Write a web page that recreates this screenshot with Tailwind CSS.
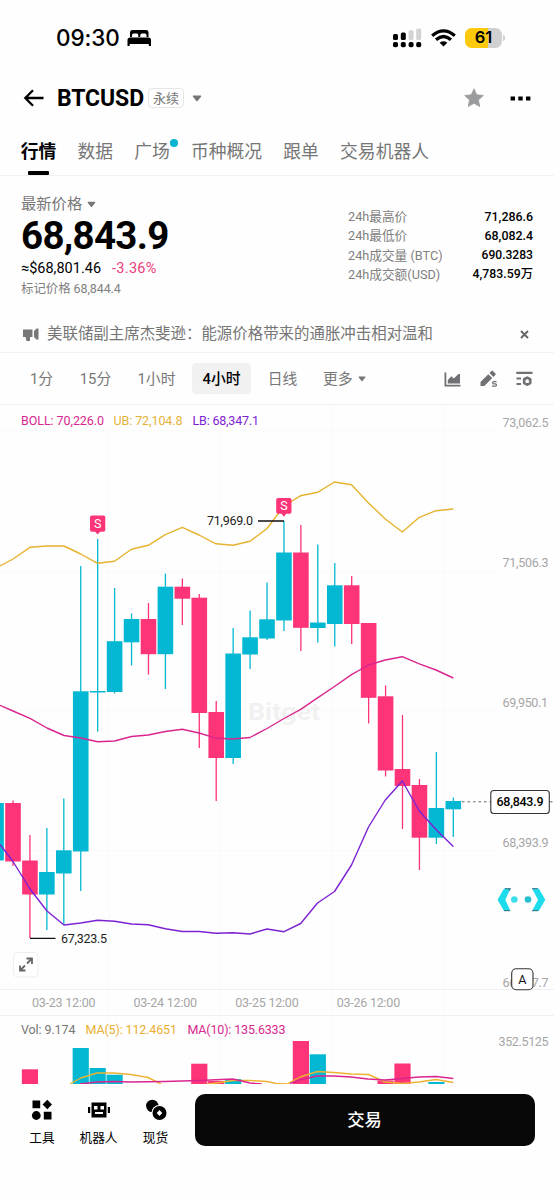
<!DOCTYPE html>
<html lang="zh-CN">

<head>
    <meta charset="UTF-8">
    <meta name="viewport" content="width=device-width, initial-scale=1.0">
    <title>BTCUSD 永续</title>
    <script src="https://cdn.jsdelivr.net/npm/@tailwindcss/browser@4"></script>
</head>

<body class="bg-white">
    <div class="w-[554px] h-[1200px] overflow-hidden flex flex-col bg-[#fefefe] text-black font-['Roboto','Noto_Sans_CJK_SC',sans-serif]">

        <!-- status bar -->
        <div class="h-[75px] shrink-0 flex items-center pl-[56px] pr-[49px]">
            <span class="pt-[2px] font-['Inter',sans-serif] font-medium text-[22.5px] leading-none tracking-[-0.1px]">09:30</span>
            <svg class="ml-[7px] mt-px" width="25" height="18" viewBox="0 0 25 18">
                <path d="M3 8V3.500Q3 1 5.500 1H19Q21.500 1 21.500 3.500V8H19.500V6.200Q19.500 4.500 18 4.500H15Q13.300 4.500 13.300 6.200V8H11.300V6.200Q11.300 4.500 9.800 4.500H6.700Q5 4.500 5 6.200V8Z" />
                <path d="M.5 17V11Q.5 8.500 3 8.500H21.500Q24 8.500 24 11V17H21.800V15H2.700V17Z" />
            </svg>
            <div class="flex items-center ml-auto">
                <svg width="29" height="20" viewBox="0 0 29 20">
                    <rect x="0" y="6" width="5" height="6" rx="1.500" />
                    <rect x="7.800" y="4.500" width="5" height="7.500" rx="1.500" />
                    <rect x="15.600" y="2.300" width="5" height="9.700" rx="1.500" fill="#d3d3d3" />
                    <rect x="23.200" y="0.500" width="5" height="11.500" rx="1.500" fill="#d3d3d3" />
                    <rect x="0" y="14" width="5" height="5.200" rx="1.800" />
                    <rect x="7.800" y="14" width="5" height="5.200" rx="1.800" />
                    <rect x="15.600" y="14" width="5" height="5.200" rx="1.800" />
                    <rect x="23.200" y="14" width="5" height="5.200" rx="1.800" />
                </svg>
                <svg class="ml-[9px]" width="25" height="18" viewBox="0 0 25 18" fill="none" stroke="#000" stroke-width="3.300">
                    <path d="M1.200 6.800Q12.500 -3 23.800 6.800" />
                    <path d="M5 10.800Q12.500 4.300 20 10.800" />
                    <path d="M12.500 17.500L8.700 13.700Q12.500 10.800 16.300 13.700Z" fill="#000" stroke="none" />
                </svg>
                <div class="ml-[9px] w-[37px] h-[20px] rounded-[6.500px] overflow-hidden bg-linear-to-r from-[#fdc90d] from-[62%] to-[#d0d0d0] to-[62%] flex items-center justify-center font-['Inter',sans-serif] font-semibold text-[16.5px] leading-none">61</div>
                <div class="ml-[1px] w-[2px] h-[6px] rounded-r bg-[#cfcfcf]"></div>
            </div>
        </div>

        <!-- title -->
        <div class="h-[46px] shrink-0 flex items-center pl-[23px] pr-[23px]">
            <svg width="22" height="18" viewBox="0 0 22 18" fill="none" stroke="#000" stroke-width="2.300">
                <path d="M20.500 9H2.500M10 1.200L2.300 9L10 16.800" />
            </svg>
            <h1 class="ml-[12px] w-[88px] font-bold text-[23px] leading-none tracking-[-0.1px]">BTCUSD</h1>
            <span class="ml-[3px] w-[36px] h-[20px] rounded-[4px] border border-[#e6e6e6] flex items-center justify-center text-[13px] leading-none text-[#777]">永续</span>
            <svg class="ml-[8px]" width="10" height="7" viewBox="0 0 10 7" fill="#777"><path d="M1.200 .5H8.800Q9.600 .7 9 1.700L5.600 6Q5 6.600 4.400 6L1 1.700Q.4 .7 1.200 .5Z" /></svg>
            <svg class="ml-auto" width="20" height="20" viewBox="0 0 20 20" fill="#9b9c9e"><path d="M10 .8L12.700 6.800L19.300 7.500L14.400 12L15.800 18.600L10 15.300L4.200 18.600L5.600 12L.7 7.500L7.300 6.800Z" stroke="#9b9c9e" stroke-linejoin="round" stroke-width=".8" /></svg>
            <svg class="ml-[26px]" width="21" height="5" viewBox="0 0 21 5"><path d="M.6 .4H5V4.600H.6ZM8.300 .4H12.700V4.600H8.300ZM16 .4H20.400V4.600H16Z" /></svg>
        </div>

        <!-- tabs -->
        <div class="h-[55px] shrink-0 border-b border-[#f1f1f1] flex gap-[21.2px] pl-[20.7px] text-[17.800px] leading-[61px] text-[#767676] whitespace-nowrap">
            <div class="relative font-bold text-black">行情<span class="absolute left-[7px] bottom-0 w-[21px] h-[4px] rounded-[1px] bg-black"></span></div>
            <div>数据</div>
            <div class="relative">广场<span class="absolute left-[35.500px] top-[18px] size-[8px] rounded-full bg-[#06b4d2]"></span></div>
            <div>币种概况</div>
            <div>跟单</div>
            <div>交易机器人</div>
        </div>

        <!-- price -->
        <div class="h-[139px] shrink-0 flex justify-between pl-[21px] pr-[21px]">
            <div class="pt-[18px] whitespace-nowrap">
                <div class="h-[21px] flex items-center text-[15.300px] leading-none text-[#777]">最新价格
                    <svg class="ml-[5px]" width="9" height="7" viewBox="0 0 10 7" fill="#777"><path d="M1.200 .5H8.800Q9.600 .7 9 1.700L5.600 6Q5 6.600 4.400 6L1 1.700Q.4 .7 1.200 .5Z" /></svg>
                </div>
                <div class="h-[42px] flex items-center font-bold text-[38.500px] leading-none tracking-[-0.7px]">68,843.9</div>
                <div class="h-[24px] flex items-center text-[14.5px] leading-none">
                    <span class="w-[91px]">≈$68,801.46</span>
                    <span class="text-[#ee3c7c] tracking-[0.3px]">-3.36%</span>
                </div>
                <div class="h-[17px] flex items-center text-[12.500px] leading-none tracking-[-0.1px] text-[#808080]">标记价格 68,844.4</div>
            </div>
            <div class="pt-[31px] w-[185px] text-[12.700px] leading-[19.3px] text-[#808080]">
                <div class="h-[19.3px] flex justify-between"><span>24h最高价</span><span class="font-medium text-[12.400px] text-black">71,286.6</span></div>
                <div class="h-[19.3px] flex justify-between"><span>24h最低价</span><span class="font-medium text-[12.400px] text-black">68,082.4</span></div>
                <div class="h-[19.3px] flex justify-between"><span>24h成交量 (BTC)</span><span class="font-medium text-[12.100px] text-black">690.3283</span></div>
                <div class="h-[19.3px] flex justify-between"><span>24h成交额(USD)</span><span class="font-medium text-[12.300px] text-black">4,783.59万</span></div>
            </div>
        </div>

        <!-- news -->
        <div class="h-[38px] shrink-0 border-b border-[#f1f1f1] flex items-center pl-[22px] pr-[25px] pt-[2px]">
            <svg width="18" height="15" viewBox="0 0 18 15" fill="#777"><path d="M1 2.500H10.500V10H8V14H4.500L3.500 10H1ZM12 4L14.500 1.500H16.500V12.500H14.500L12 10Z" /></svg>
            <span class="ml-[7px] text-[15.450px] leading-none text-[#767676] whitespace-nowrap">美联储副主席杰斐逊：能源价格带来的通胀冲击相对温和</span>
            <svg class="ml-auto" width="9" height="9" viewBox="0 0 9 9" stroke="#666" stroke-width="1.900"><path d="M1 1L8 8M8 1L1 8" /></svg>
        </div>

        <!-- intervals -->
        <div class="h-[52px] shrink-0 border-b border-[#f1f1f1] flex items-center pl-[16px] pr-[21px] text-[14.800px] leading-none text-[#777] whitespace-nowrap">
            <span class="w-[51px] pt-[2px] text-center">1分</span>
            <span class="w-[57px] pt-[2px] text-center">15分</span>
            <span class="w-[65px] pt-[2px] text-center">1小时</span>
            <span class="ml-[3px] w-[59px] h-[31px] pt-[2px] rounded-[4px] bg-[#f1f1f1] flex items-center justify-center font-medium text-black">4小时</span>
            <span class="w-[63px] pt-[2px] text-center">日线</span>
            <span class="ml-[9px] pt-[2px]">更多</span>
            <svg class="ml-[5px]" width="8" height="6" viewBox="0 0 10 7" fill="#777"><path d="M1.200 .5H8.800Q9.600 .7 9 1.700L5.600 6Q5 6.600 4.400 6L1 1.700Q.4 .7 1.200 .5Z" /></svg>
            <svg class="ml-auto mt-px" width="17" height="15" viewBox="0 0 17 15" fill="#707075"><path d="M.5 .5H2.300V12.700H16.500V14.500H.5ZM3.800 11.500V8L7.300 4.300L9.800 6.500L14.500 2H16V11.500Z" /></svg>
            <svg class="ml-[19px]" width="18" height="18" viewBox="0 0 18 18" fill="#707075">
                <path d="M.5 12L8.300 4.200L12.200 8.100L4.400 15.900H.5ZM9.500 3L11.700 .8Q12.300 .4 12.900 .9L15.500 3.500Q16 4.100 15.500 4.700L13.400 6.900Z" />
                <path d="M16.500 11.600H13.600Q12.600 11.600 12.600 12.700T13.600 13.900H15.500Q16.500 13.900 16.500 15T15.500 16.200H12" fill="none" stroke="#707075" stroke-width="1.200" />
            </svg>
            <svg class="ml-[18px]" width="17" height="16" viewBox="0 0 17 16" fill="#707075">
                <path d="M.3 .8H16.500V2.900H.3ZM.5 6.500H5V8.500H.5ZM.5 12H5V14H.5Z" />
                <path d="M11.200 6.600L14.200 8.200V12L11.200 13.700L8.200 12V8.200Z" fill="none" stroke="#707075" stroke-width="2.700" stroke-linejoin="round" />
            </svg>
        </div>

        <!-- chart -->
        <svg id="chart" class="shrink-0" width="554" height="679" viewBox="0 405 554 679" font-size="12.500">
            <g stroke="#fafafa" stroke-width="1">
                <path d="M0 430.500H500M0 571.500H500M0 710.500H500M0 850.500H500" />
                <path d="M108.500 430V1084M220.500 430V1084M332.500 405V1084M443.500 405V1084" />
            </g>
            <path d="M0 989.500H554M0 1015.500H554" stroke="#f0f0f0" />

            <text x="248" y="719.500" font-size="24.500" font-weight="700" fill="#f1f1f1" textLength="72" lengthAdjust="spacingAndGlyphs">Bitget</text>
            <g id="candles"></g>
            <g id="volumes"></g>

            <g fill="none" stroke-width="1.400" stroke-linejoin="round">
                <polyline stroke="#e6b32e" points="0,566 13,559 30,547.300 47,546 64,546 80.700,554 97.600,563.300 114.500,561.300 131.500,549.300 148.300,545.300 165.300,534.700 182.300,527.300 199,535 216,543.800 233,545.300 250,541.300 267,528.500 284,506 300.700,495.700 317.500,492.300 334.500,482 351.500,484.800 368.500,503 385.300,519 402.300,532 419.300,517.300 436,510.700 453.300,509" />
                <polyline stroke="#d9258f" points="0,705.300 13,711 30,718.300 47,728 64,735.500 80.700,738 97.600,741.700 114.500,741 131.500,736.500 148.300,735 165.300,731.500 182.300,729.300 199,733 216,738.200 233,739 250,737.500 267,728.500 284,718.500 300.700,709.300 317.500,697.800 334.500,686.500 351.500,674.700 368.500,665 385.300,660 402.300,656.700 419.300,663.800 436,670 453.300,678" />
                <polyline stroke="#7d22d3" points="0,844.500 13,861.500 30,889 47,911 64,925 80.700,923 97.600,920.300 114.500,921.300 131.500,924 148.300,924.800 165.300,928.800 182.300,931.500 199,931.500 216,933.200 233,932.800 250,934 267,929 284,931.700 300.700,923.500 317.500,903 334.500,891.500 351.500,865 368.500,827 385.300,800 402.300,781 419.300,811 436,829.500 453.300,846.500" />
                <polyline stroke="#eeb233" points="70,1084 80.700,1078 97,1073 114,1073 131,1074.500 148,1077.500 161,1084" />
                <polyline stroke="#eeb233" points="205,1084.500 216,1083 233,1080.500 250,1080.500 267,1081.500 276,1083.500 287,1084 300,1077 317.500,1071.500 334,1072.500 351,1074 368.500,1074.500 385,1082 402,1083.500 419,1082 436,1079.500 453.300,1082.500" />
                <polyline stroke="#d9258f" points="80,1084 97,1082 114,1081.500 131,1082 165,1081.500 199,1080.500 233,1079 250,1083 262,1084" />
                <polyline stroke="#d9258f" points="290,1083.500 300,1080 317,1076 334,1076 351,1077 368,1079 385,1080 402,1078.500 419,1077 436,1076.500 453.300,1078.500" />
            </g>

            <!-- indicator values -->
            <text x="21" y="425" fill="#d8288f" textLength="83">BOLL: 70,226.0</text>
            <text x="113.500" y="425" fill="#e3b337" textLength="69">UB: 72,104.8</text>
            <text x="192.500" y="425" fill="#7d22d3" textLength="66.500">LB: 68,347.1</text>
            <text x="21" y="1034" fill="#777" textLength="54.500">Vol: 9.174</text>
            <text x="85.500" y="1034" fill="#eab033" textLength="91.500">MA(5): 112.4651</text>
            <text x="187.500" y="1034" fill="#d8288f" textLength="98">MA(10): 135.6333</text>

            <!-- sell marks -->
            <g fill="#fd3478">
                <path d="M92 515.500H103.500Q105.300 515.500 105.300 517.300V530Q105.300 531.700 103.500 531.700H100L97.600 534.500L95.200 531.700H92Q90 531.700 90 530V517.300Q90 515.500 92 515.500Z" />
                <path d="M278.200 498H289.700Q291.500 498 291.500 499.800V512Q291.500 513.700 289.700 513.700H286.200L283.900 516.800L281.500 513.700H278.200Q276.200 513.700 276.200 512V499.800Q276.200 498 278.200 498Z" />
            </g>
            <text x="97.600" y="527.800" font-size="12.500" fill="#fff" text-anchor="middle">S</text>
            <text x="283.900" y="510.200" font-size="12.500" fill="#fff" text-anchor="middle">S</text>

            <!-- high / low -->
            <path d="M258 521H284M30 938.300H55.500" stroke="#111" stroke-width="1.300" />
            <text x="207" y="525.300" fill="#222" textLength="46">71,969.0</text>
            <text x="61" y="942.800" fill="#222" textLength="46">67,323.5</text>

            <!-- price axis -->
            <g fill="#a6a6a6">
                <text x="502.500" y="427.300" textLength="46">73,062.5</text>
                <text x="502.500" y="567" textLength="46">71,506.3</text>
                <text x="502.500" y="706.800" textLength="45.500">69,950.1</text>
                <text x="502.500" y="846.800" textLength="46">68,393.9</text>
                <text x="502.500" y="986.500" textLength="46">66,837.7</text>
                <text x="498.500" y="1045.500" textLength="50">352.5125</text>
            </g>
            <g fill="#a6a6a6">
                <text x="32" y="1006.800" textLength="63.500">03-23 12:00</text>
                <text x="133.500" y="1006.800" textLength="63.500">03-24 12:00</text>
                <text x="235.200" y="1006.800" textLength="63.500">03-25 12:00</text>
                <text x="336.700" y="1006.800" textLength="63.500">03-26 12:00</text>
            </g>

            <path d="M462 801.800H491M550 801.800H554" stroke="#666" stroke-dasharray="2.500 3" />
            <rect x="490.800" y="790.500" width="58.500" height="23" rx="3" fill="#fff" stroke="#333" stroke-width="1.100" />
            <text x="496.500" y="806.300" font-weight="500" fill="#000" textLength="47">68,843.9</text>

            <rect x="511.700" y="968.700" width="21.300" height="21" rx="4.500" fill="#fff" stroke="#333" stroke-width="1.100" />
            <text x="522.400" y="984" font-size="12.500" fill="#111" text-anchor="middle">A</text>

            <!-- floating button -->
            <g fill="#1fdcec">
                <path d="M504 888.500H510.500L505.300 899.800L510.500 911H504L497.500 899.800Z" />
                <path d="M532 888.500H538.800L545.300 899.800L538.800 911H532L538 899.800Z" />
                <circle cx="514.300" cy="899.500" r="3.300" fill="#3bdde8" />
                <circle cx="528" cy="899.500" r="3.300" fill="#25bfd2" />
            </g>
            <path d="M505 888.700H510.500L509 891M532 888.700H537.500M504 910.700H510M532 910.700H538" fill="none" stroke="#3b6b78" stroke-width="1" />

            <!-- expand -->
            <rect x="13.500" y="952.500" width="24.500" height="24.500" rx="4" fill="#fff" stroke="#eee" />
            <path d="M26.500 958.500H32V964M31.500 959L27 963.500M20 965.500V970.500H25.500M20.500 970L25 965.500" fill="none" stroke="#666" stroke-width="1.800" />
        </svg>

        <!-- bottom bar -->
        <div class="flex-1 flex items-start pl-[14px] pt-[10px] text-[12.700px] leading-none">
            <div class="w-[56px] pt-[5px] flex flex-col items-center">
                <svg width="22" height="22" viewBox="0 0 22 22"><path d="M1.500 1.500H9.200V9.200H1.500ZM12.800 12.800H20.500V20.500H12.800ZM16.300 .8L21 5.500L16.300 10.200L11.600 5.500Z" /><circle cx="5.300" cy="16.500" r="4.400" /></svg>
                <span class="mt-[11px]">工具</span>
            </div>
            <div class="w-[57px] pt-[5px] flex flex-col items-center">
                <svg width="22" height="22" viewBox="0 0 22 22"><path fill-rule="evenodd" d="M3.500 3.500H18.500V18.500H3.500ZM6 7V10.500H9.500V7ZM12.500 7V10.500H16V7ZM7 13V15H15V13ZM0 8H2.200V14H0ZM19.800 8H22V14H19.800Z" /></svg>
                <span class="mt-[11px]">机器人</span>
            </div>
            <div class="w-[57px] pt-[5px] flex flex-col items-center">
                <svg width="22" height="22" viewBox="0 0 22 22"><circle cx="7.300" cy="7" r="6.200" /><circle cx="14.500" cy="14" r="8" fill="#fefefe" /><circle cx="14.500" cy="14" r="7" /><path d="M14.500 11L17.300 14L14.500 17L11.700 14Z" fill="#fefefe" /></svg>
                <span class="mt-[11px]">现货</span>
            </div>
            <button class="ml-[10.500px] w-[340px] h-[52px] rounded-[10px] bg-[#080808] text-white font-medium text-[17.300px] leading-none pt-[2px]">交易</button>
        </div>
    </div>

    <script>
        var UP = '#04b8d4', DOWN = '#fd3478';
        // x step between candles and centre of the first whole one
        var STEP = 16.935, X0 = 13;

        // [index, high, low, top, bottom, colour]
        var candles = [
            [-1, 803, 860.5, 803, 860.5, UP],
            [0, 800.5, 866, 803, 861.5, DOWN],
            [1, 835, 938, 860.5, 894.5, DOWN],
            [2, 828, 930, 872, 894.5, UP],
            [3, 798.5, 925, 850.3, 873.5, UP],
            [4, 566, 891, 691.3, 851.5, UP],
            [5, 539, 731.5, 691, 692.5, UP],
            [6, 588, 693.5, 641.2, 692, UP],
            [7, 613.5, 665.5, 619, 642.3, UP],
            [8, 603, 674.5, 619, 654.2, DOWN],
            [9, 573.5, 689, 586.7, 654.2, UP],
            [10, 578.5, 625, 586.7, 598.7, DOWN],
            [11, 594, 748, 597.7, 713, DOWN],
            [12, 701, 801, 712, 758, DOWN],
            [13, 628, 764, 653.5, 758, UP],
            [14, 610.5, 669, 637.3, 654.5, UP],
            [15, 582.5, 640, 619.3, 638.5, UP],
            [16, 521, 631, 552.5, 620.5, UP],
            [17, 525, 651, 552.5, 627.8, DOWN],
            [18, 544.5, 642.5, 622.5, 628, UP],
            [19, 563, 646.5, 585.3, 624, UP],
            [20, 576, 644, 585.3, 624, DOWN],
            [21, 623, 723.5, 623, 697.8, DOWN],
            [22, 685.5, 776.5, 696.3, 770.5, DOWN],
            [23, 715, 829, 769, 786, DOWN],
            [24, 779, 870, 785, 837.7, DOWN],
            [25, 752, 844, 808, 837.7, UP],
            [26, 797.5, 837, 801, 809.3, UP]
        ];

        // [index, top, colour]
        var volumes = [
            [1, 1069.3, DOWN], [4, 1048, UP], [5, 1068, UP], [6, 1074.7, UP],
            [11, 1063.7, DOWN], [12, 1081, DOWN], [13, 1079, UP],
            [17, 1041, DOWN], [18, 1054.3, UP], [22, 1080.5, DOWN],
            [23, 1063.5, DOWN], [25, 1082, UP]
        ];

        function rect(x, y, w, h, fill) {
            return '<rect x="' + x + '" y="' + y + '" width="' + w + '" height="' + h + '" fill="' + fill + '"/>';
        }

        // wicks are drawn under the indicator lines together with the bodies
        document.getElementById('candles').innerHTML = candles.map(function (c) {
            var x = X0 + STEP * c[0];
            return rect(x - 0.65, c[1], 1.3, c[2] - c[1], c[5]) + rect(x - 7.8, c[3], 15.6, c[4] - c[3], c[5]);
        }).join('');

        document.getElementById('volumes').innerHTML = volumes.map(function (v) {
            return rect(X0 + STEP * v[0] - 8.1, v[1], 16.2, 1084 - v[1], v[2]);
        }).join('');
    </script>
</body>

</html>
